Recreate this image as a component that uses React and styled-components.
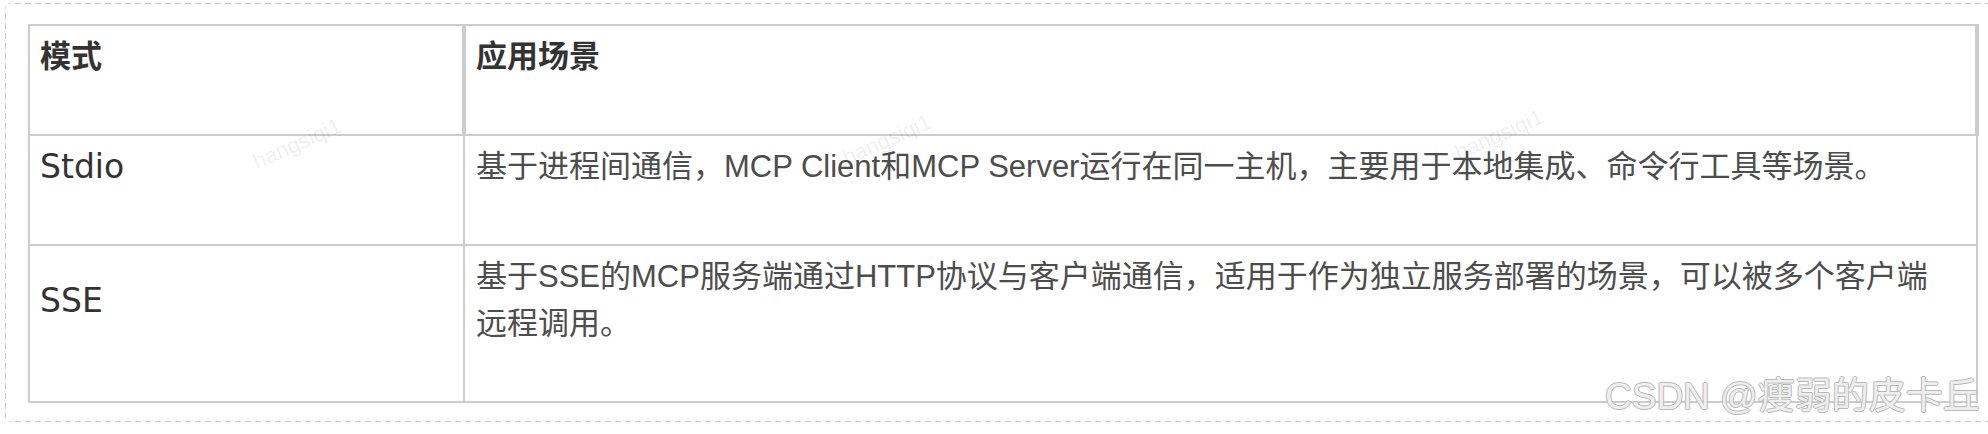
import React from 'react';
import styled, { createGlobalStyle } from 'styled-components';

const Global = createGlobalStyle`
  html, body { margin: 0; padding: 0; background: #ffffff; overflow: hidden; }
  body { font-family: "Liberation Sans", "Noto Sans CJK SC", sans-serif; }
`;

const dash = '#c8c8c8';

const Frame = styled.div`
  position: relative;
  box-sizing: border-box;
  width: 1995px;
  margin: 3px 0 0 5px;
  padding: 21px 0 19px 23px;
  border-radius: 6px 0 0 6px;
  background:
    repeating-linear-gradient(to right, ${dash} 0 6px, transparent 6px 10px) left top / 100% 1px no-repeat,
    repeating-linear-gradient(to right, ${dash} 0 6px, transparent 6px 10px) left bottom / 100% 1px no-repeat,
    repeating-linear-gradient(to bottom, ${dash} 0 6px, transparent 6px 10px) left top / 1px 100% no-repeat;
`;

const Table = styled.table`
  border-collapse: collapse;
  table-layout: fixed;
  width: 1951px;
  font-size: 31px;
  line-height: 47px;
  color: #4d4d4d;
`;

const Th = styled.th`
  border: 2px solid #cccccc;
  border-right-width: 4px;
  padding: 7px 10px;
  text-align: left;
  font-weight: 700;
  color: #333333;
  vertical-align: middle;
`;

const Td = styled.td`
  border: 2px solid #cccccc;
  padding: ${(p) => (p.$label ? '7px 10px' : '7px 30px 7px 11px')};
  vertical-align: middle;
  color: ${(p) => (p.$label ? '#333333' : '#4d4d4d')};
  font-family: ${(p) =>
    p.$label ? '"DejaVu Sans", "Noto Sans CJK SC", sans-serif' : 'inherit'};
  font-size: ${(p) => (p.$label ? '33px' : '31px')};
`;

const Line = styled.p`
  margin: 0 0 47px;
`;

const Mark = styled.span`
  position: absolute;
  font-family: "Liberation Sans", sans-serif;
  font-size: 22px;
  color: rgba(0, 0, 0, 0.08);
  transform: rotate(-24deg);
  transform-origin: center;
  pointer-events: none;
  white-space: nowrap;
`;

const Signature = styled.span`
  position: absolute;
  left: 1600px;
  top: 372px;
  font-family: "Liberation Sans", "Noto Sans CJK SC", sans-serif;
  font-size: 37px;
  line-height: 44px;
  color: #eeeeee;
  white-space: nowrap;
  text-shadow: 1px 0 0 #b8b8b8, -1px 0 0 #b8b8b8, 0 1px 0 #b8b8b8, 0 -1px 0 #b8b8b8;
`;

const rows = [
  {
    mode: 'Stdio',
    text: '基于进程间通信，MCP Client和MCP Server运行在同一主机，主要用于本地集成、命令行工具等场景。',
  },
  {
    mode: 'SSE',
    text: '基于SSE的MCP服务端通过HTTP协议与客户端通信，适用于作为独立服务部署的场景，可以被多个客户端远程调用。',
  },
];

const marks = [
  { left: 245, top: 128 },
  { left: 835, top: 124 },
  { left: 1447, top: 119 },
];

export default function App() {
  return (
    <>
      <Global />
      <Frame>
        <Table>
          <colgroup>
            <col style={{ width: '435px' }} />
            <col />
          </colgroup>
          <thead>
            <tr>
              <Th>
                <Line>模式</Line>
              </Th>
              <Th>
                <Line>应用场景</Line>
              </Th>
            </tr>
          </thead>
          <tbody>
            {rows.map((r) => (
              <tr key={r.mode}>
                <Td $label>
                  <Line>{r.mode}</Line>
                </Td>
                <Td>
                  <Line>{r.text}</Line>
                </Td>
              </tr>
            ))}
          </tbody>
        </Table>
        {marks.map((m, i) => (
          <Mark key={i} style={{ left: m.left, top: m.top }}>
            hangsiqi1
          </Mark>
        ))}
        <Signature>CSDN @瘦弱的皮卡丘</Signature>
      </Frame>
    </>
  );
}
